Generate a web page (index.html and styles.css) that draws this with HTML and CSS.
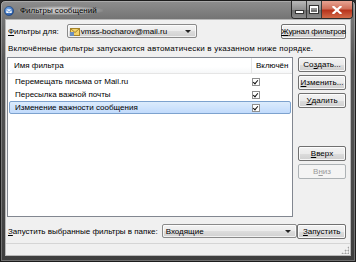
FILE: index.html
```html
<!DOCTYPE html>
<html>
<head>
<meta charset="utf-8">
<link rel="stylesheet" href="styles.css">
</head>
<body>
<div class="window">
  <div class="titlebar">
    <svg class="appicon" width="10" height="10" viewBox="0 0 10 10">
      <defs>
        <radialGradient id="ag" cx="40%" cy="35%" r="70%">
          <stop offset="0" stop-color="#7fb3f0"/>
          <stop offset="1" stop-color="#1d4f9c"/>
        </radialGradient>
      </defs>
      <circle cx="5" cy="5" r="4.6" fill="url(#ag)" stroke="#173f7a" stroke-width="0.6"/>
      <path d="M2.3 4.2 L5 6.8 L7.7 4.2 L7.7 6.9 L2.3 6.9 Z" fill="#fff"/>
      <path d="M2.3 3.3 L7.7 3.3 L5 5.8 Z" fill="#e6eefa"/>
    </svg>
    <span class="title">Фильтры сообщений</span>
    <div class="controls">
      <div class="ctl min"><span class="minbar"></span></div>
      <div class="ctl max"><span class="maxbox"></span></div>
      <div class="ctl close">
        <svg width="10" height="8" viewBox="0 0 10 8"><path d="M1.5 0.8 L8.5 7.2 M8.5 0.8 L1.5 7.2" stroke="#fff" stroke-width="2.2" stroke-linecap="square"/></svg>
      </div>
    </div>
  </div>
  <div class="client">
    <div class="toprow">
      <span class="lbl"><u>Ф</u>ильтры для:</span>
      <div class="combo account">
        <svg class="acct" width="10" height="9" viewBox="0 0 10 9">
          <rect x="0.5" y="1.5" width="9" height="7" fill="#f3d36b" stroke="#a5832a"/>
          <path d="M0.5 1.5 L5 5.5 L9.5 1.5" fill="none" stroke="#a5832a"/>
          <rect x="0" y="5" width="4" height="4" fill="#6c8fbf"/>
        </svg>
        <span class="ctext">vmss-bocharov@mail.ru</span>
        <span class="arrow"></span>
      </div>
      <div class="btn journal"><u>Ж</u>урнал фильтров</div>
    </div>
    <div class="info">Включённые фильтры запускаются автоматически в указанном ниже порядке.</div>
    <div class="main">
      <div class="list">
        <div class="head">
          <div class="c1">Имя фильтра</div>
          <div class="c2">Включён</div>
        </div>
        <div class="row">
          <div class="c1">Перемещать письма от Mail.ru</div>
          <div class="c2"><span class="chk"></span></div>
        </div>
        <div class="row">
          <div class="c1">Пересылка важной почты</div>
          <div class="c2"><span class="chk"></span></div>
        </div>
        <div class="row sel">
          <div class="c1">Изменение важности сообщения</div>
          <div class="c2"><span class="chk"></span></div>
        </div>
      </div>
      <div class="side">
        <div class="btn">Со<u>з</u>дать...</div>
        <div class="btn"><u>И</u>зменить...</div>
        <div class="btn"><u>У</u>далить</div>
        <div class="btn up"><u>В</u>верх</div>
        <div class="btn disabled">В<u>н</u>из</div>
      </div>
    </div>
    <div class="bottomrow">
      <span class="lbl"><u>З</u>апустить выбранные фильтры в папке:</span>
      <div class="combo folder">
        <span class="ctext">Входящие</span>
        <span class="arrow"></span>
      </div>
      <div class="btn run"><u>З</u>апустить</div>
    </div>
    <div class="status"><span class="grip"></span></div>
  </div>
</div>
</body>
</html>
```

FILE: styles.css
```css
html, body {
  margin: 0;
  padding: 0;
  background: #2b2b2b;
}
body {
  width: 356px;
  height: 262px;
  overflow: hidden;
  font-family: "Liberation Sans", Arial, sans-serif;
  font-size: 8px;
  color: #000;
}
.window {
  width: 356px;
  height: 262px;
  box-sizing: border-box;
  border: 1px solid #1c1c1c;
  border-radius: 5px 5px 0 0;
  background: linear-gradient(to bottom, #8e8e8e 0px, #747474 18px, #565656 60px, #484848 200px, #3e3e3e 262px);
  display: flex;
  flex-direction: column;
  box-shadow: inset 0 0 0 1px rgba(255,255,255,0.25);
}
.titlebar {
  height: 18px;
  display: flex;
  align-items: center;
  padding-left: 3px;
  position: relative;
}
.appicon {
  flex: none;
  margin-top: 1px;
}
.title {
  margin-left: 4px;
  margin-top: 1px;
  font-size: 8px;
  color: #000;
  padding: 0 6px 0 2px;
  border-radius: 8px;
  background: radial-gradient(ellipse at center, rgba(225,225,225,0.7) 35%, rgba(225,225,225,0) 75%);
}
.controls {
  margin-left: auto;
  margin-right: 2px;
  align-self: flex-start;
  display: flex;
  height: 17px;
  border: 1px solid #2a2a2a;
  border-top: none;
  border-radius: 0 0 4px 4px;
  overflow: hidden;
}
.ctl {
  height: 17px;
  display: flex;
  align-items: center;
  justify-content: center;
  box-sizing: border-box;
}
.min, .max {
  width: 15px;
  background: linear-gradient(to bottom, #b9b9b9 0, #8f8f8f 50%, #6d6d6d 51%, #8a8a8a 100%);
  border-right: 1px solid #3a3a3a;
}
.minbar {
  width: 7px;
  height: 2px;
  margin-top: 4px;
  background: #fff;
  border: 1px solid #333;
}
.maxbox {
  width: 6px;
  height: 4px;
  border: 1px solid #fff;
  border-top-width: 2px;
  outline: 1px solid #333;
}
.close {
  width: 30px;
  background: linear-gradient(to bottom, #e8a493 0, #d0705a 45%, #b8341c 55%, #d26a48 100%);
}
.client {
  flex: 1;
  margin: 0 4px 5px 4px;
  background: #f0f0f0;
  border: 1px solid #b8b8b8;
  display: flex;
  flex-direction: column;
  padding: 3px 4px 0 1px;
}
.toprow, .bottomrow {
  display: flex;
  align-items: center;
  height: 16px;
}
.lbl {
  margin-left: 1px;
  white-space: nowrap;
}
.combo {
  height: 14px;
  box-sizing: border-box;
  border: 1px solid #8a8a8a;
  border-radius: 2px;
  background: linear-gradient(to bottom, #f3f3f3 0, #ebebeb 50%, #dddddd 51%, #d0d0d0 100%);
  display: flex;
  align-items: center;
  padding-left: 2px;
  box-shadow: inset 0 0 0 1px rgba(255,255,255,0.7);
}
.combo .ctext {
  flex: 1;
  white-space: nowrap;
}
.arrow {
  width: 0;
  height: 0;
  border-left: 3px solid transparent;
  border-right: 3px solid transparent;
  border-top: 3px solid #222;
  margin-right: 5px;
}
.account {
  margin-left: 8px;
  width: 130px;
}
.acct {
  margin-right: 1px;
  flex: none;
}
.btn {
  height: 15px;
  box-sizing: border-box;
  border: 1px solid #707070;
  border-radius: 2px;
  background: linear-gradient(to bottom, #f2f2f2 0, #ebebeb 50%, #dddddd 51%, #cfcfcf 100%);
  box-shadow: inset 0 0 0 1px rgba(255,255,255,0.8);
  display: flex;
  align-items: center;
  justify-content: center;
  white-space: nowrap;
}
.journal {
  margin-left: auto;
  width: 65px;
  letter-spacing: -0.2px;
}
.info {
  margin-top: 4px;
  height: 12px;
  line-height: 12px;
  white-space: nowrap;
  margin-left: 1px;
  letter-spacing: 0.2px;
}
.main {
  margin-top: 2px;
  height: 160px;
  display: flex;
}
.list {
  width: 286px;
  box-sizing: border-box;
  border: 1px solid #828790;
  background: #fff;
  display: flex;
  flex-direction: column;
  padding: 0 1px;
}
.head {
  height: 15px;
  display: flex;
  align-items: center;
  border-bottom: 1px solid #e5e5e5;
  background: linear-gradient(to bottom, #ffffff 0, #ffffff 60%, #f6f7f8 100%);
  margin: 0 -1px;
  padding: 0 1px;
}
.head .c1 {
  border-right: 1px solid #e5e5e5;
  height: 15px;
  line-height: 15px;
}
.c1 {
  width: 243px;
  padding-left: 5px;
  box-sizing: border-box;
  white-space: nowrap;
}
.c2 {
  flex: 1;
  padding-left: 4px;
  white-space: nowrap;
}
.row {
  height: 13px;
  display: flex;
  align-items: center;
  box-sizing: border-box;
  border: 1px solid transparent;
  border-radius: 2px;
}
.head + .row {
  margin-top: 1px;
}
.sel {
  background: linear-gradient(to bottom, #dcebfc 0, #c1dbfc 100%);
  border-color: #7da2ce;
}
.chk {
  display: block;
  width: 8px;
  height: 8px;
  box-sizing: border-box;
  border: 1px solid #8f8f8f;
  background: #fff;
  position: relative;
  margin-left: -5px;
}
.chk::after {
  content: "";
  position: absolute;
  left: 1px;
  top: 0px;
  width: 2px;
  height: 4px;
  border-right: 1.5px solid #111;
  border-bottom: 1.5px solid #111;
  transform: rotate(40deg);
}
.side {
  flex: 1;
  display: flex;
  flex-direction: column;
  align-items: flex-end;
  gap: 3px;
}
.side .btn {
  width: 48px;
}
.side .up {
  margin-top: 35px;
}
.btn.disabled {
  color: #9a9a9a;
  border-color: #adb2b5;
  background: #f4f4f4;
  box-shadow: none;
}
.bottomrow {
  margin-top: 6px;
}
.folder {
  margin-left: 4px;
  width: 137px;
  padding-left: 3px;
}
.run {
  margin-left: auto;
  width: 49px;
}
.status {
  margin-top: auto;
  height: 11px;
  border-top: 1px solid #d5d5d5;
  margin-left: -1px;
  margin-right: -4px;
  display: flex;
  justify-content: flex-end;
  align-items: flex-end;
}
.grip {
  width: 8px;
  height: 8px;
  margin: 0 1px 1px 0;
  background:
    radial-gradient(circle, #a0a0a0 0.8px, transparent 1.2px) 0 0 / 3px 3px;
  clip-path: polygon(100% 0, 100% 100%, 0 100%);
}
```
